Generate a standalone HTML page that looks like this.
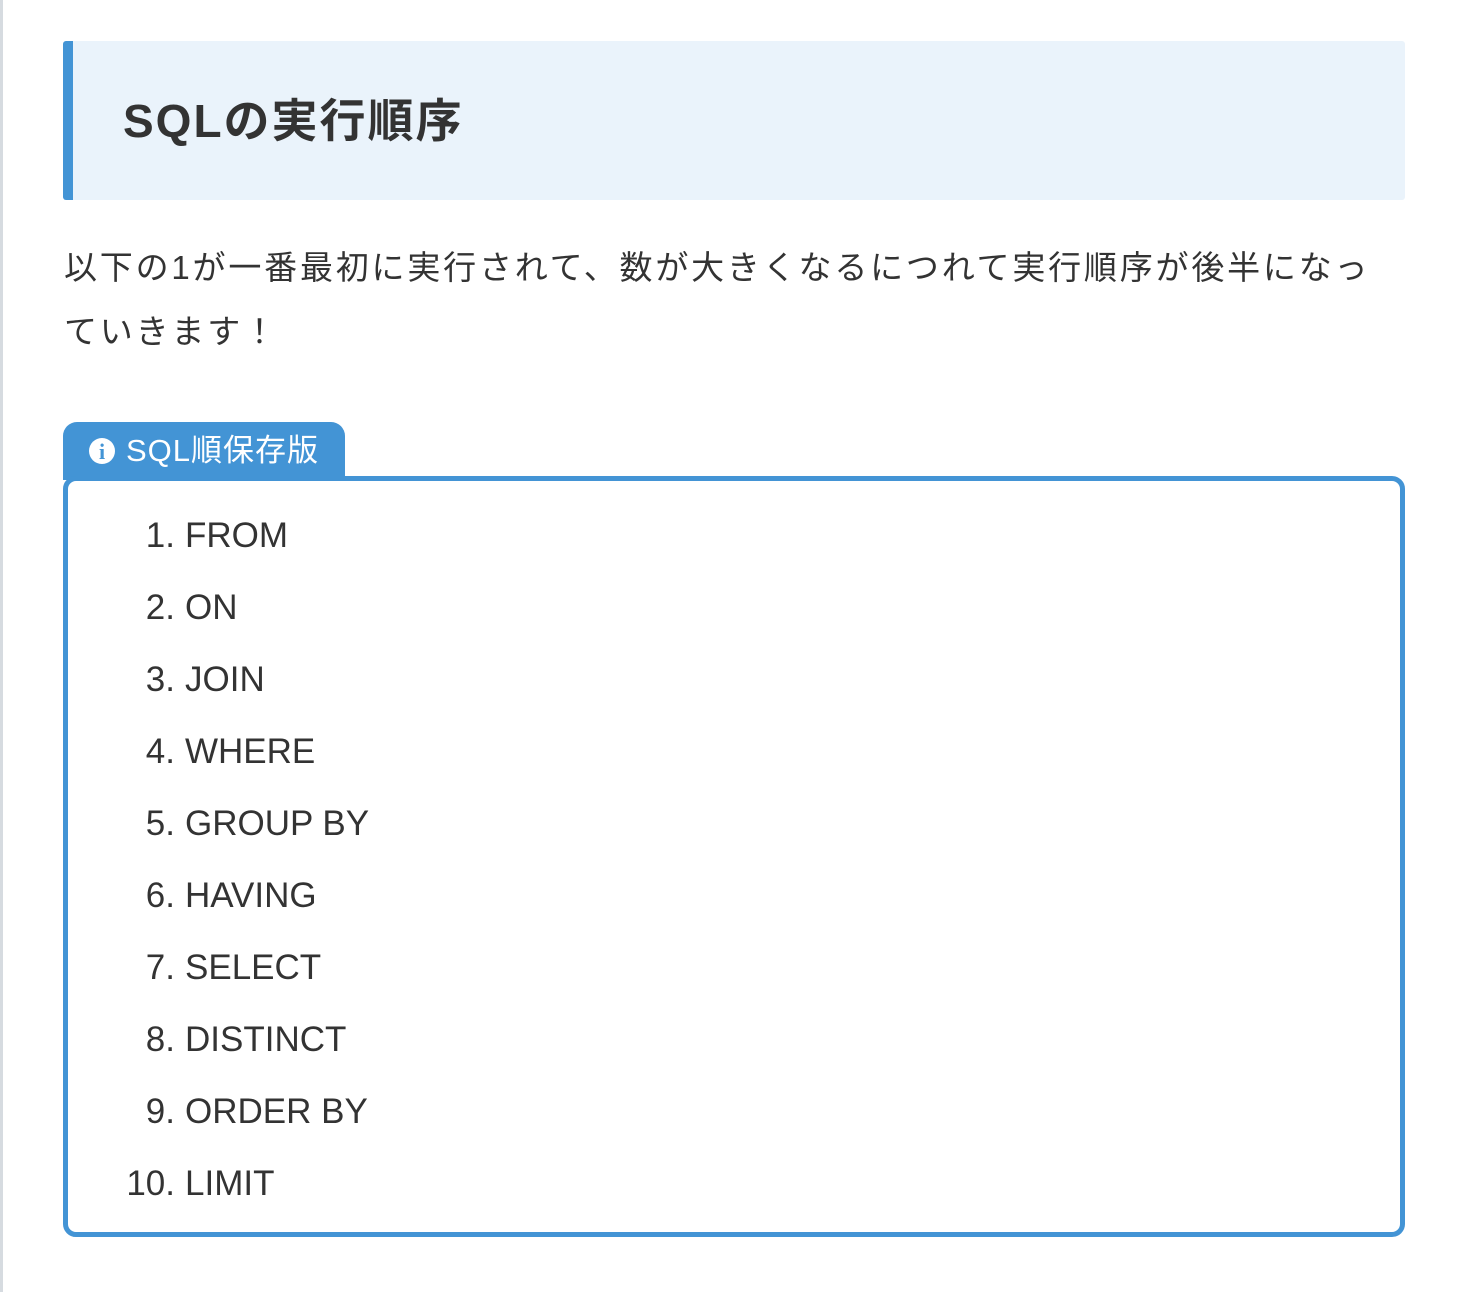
<!DOCTYPE html>
<html><head><meta charset="utf-8"><style>
body{margin:0;width:1460px;height:1292px;background:#fff;position:relative;font-family:"Liberation Sans","Noto Sans CJK JP",sans-serif;color:#333;overflow:hidden}
.lb{position:absolute;left:0;top:0;width:3px;height:1292px;background:#d6dbe0}
.h{position:absolute;left:63px;top:41px;width:1342px;height:159px;background:#eaf3fb;border-left:10px solid #4394d5;box-sizing:border-box;border-radius:3px}
.h div{position:absolute;left:50px;top:50px;font-size:46px;font-weight:bold;line-height:60px;color:#333;letter-spacing:2px;white-space:nowrap}
.p{position:absolute;left:64px;top:236px;width:1380px;font-size:33px;line-height:64px;letter-spacing:2.8px;white-space:nowrap}
.tab{position:absolute;left:63px;top:422px;width:282px;height:58px;background:#4394d5;border-radius:14px 14px 0 0;color:#fff;font-size:31px;line-height:58px}
.tab span{position:absolute;left:63px;top:0;letter-spacing:1px;white-space:nowrap}
.tab i{position:absolute;left:26px;top:16px;width:26px;height:26px;border-radius:50%;background:#fff;color:#4394d5;font-style:normal;font-weight:bold;font-family:"Liberation Serif",serif;font-size:22px;line-height:27px;text-align:center}
.box{position:absolute;left:63px;top:476px;width:1342px;height:761px;border:5px solid #4394d5;border-radius:13px;box-sizing:border-box}
.li{position:absolute;font-size:35px;line-height:72px;width:400px;white-space:nowrap}
.li b{font-weight:normal;display:inline-block;width:120px;text-align:right;margin-right:10px}
</style></head><body>
<div class="lb"></div>
<div class="h"><div>SQLの実行順序</div></div>
<div class="p">以下の1が一番最初に実行されて、数が大きくなるにつれて実行順序が後半になっ<br>ていきます！</div>
<div class="tab"><i>i</i><span>SQL順保存版</span></div>
<div class="box"></div>
<div class="li" style="left:55px;top:500px"><b>1.</b>FROM</div>
<div class="li" style="left:55px;top:572px"><b>2.</b>ON</div>
<div class="li" style="left:55px;top:644px"><b>3.</b>JOIN</div>
<div class="li" style="left:55px;top:716px"><b>4.</b>WHERE</div>
<div class="li" style="left:55px;top:788px"><b>5.</b>GROUP BY</div>
<div class="li" style="left:55px;top:860px"><b>6.</b>HAVING</div>
<div class="li" style="left:55px;top:932px"><b>7.</b>SELECT</div>
<div class="li" style="left:55px;top:1004px"><b>8.</b>DISTINCT</div>
<div class="li" style="left:55px;top:1076px"><b>9.</b>ORDER BY</div>
<div class="li" style="left:55px;top:1148px"><b>10.</b>LIMIT</div>
</body></html>
